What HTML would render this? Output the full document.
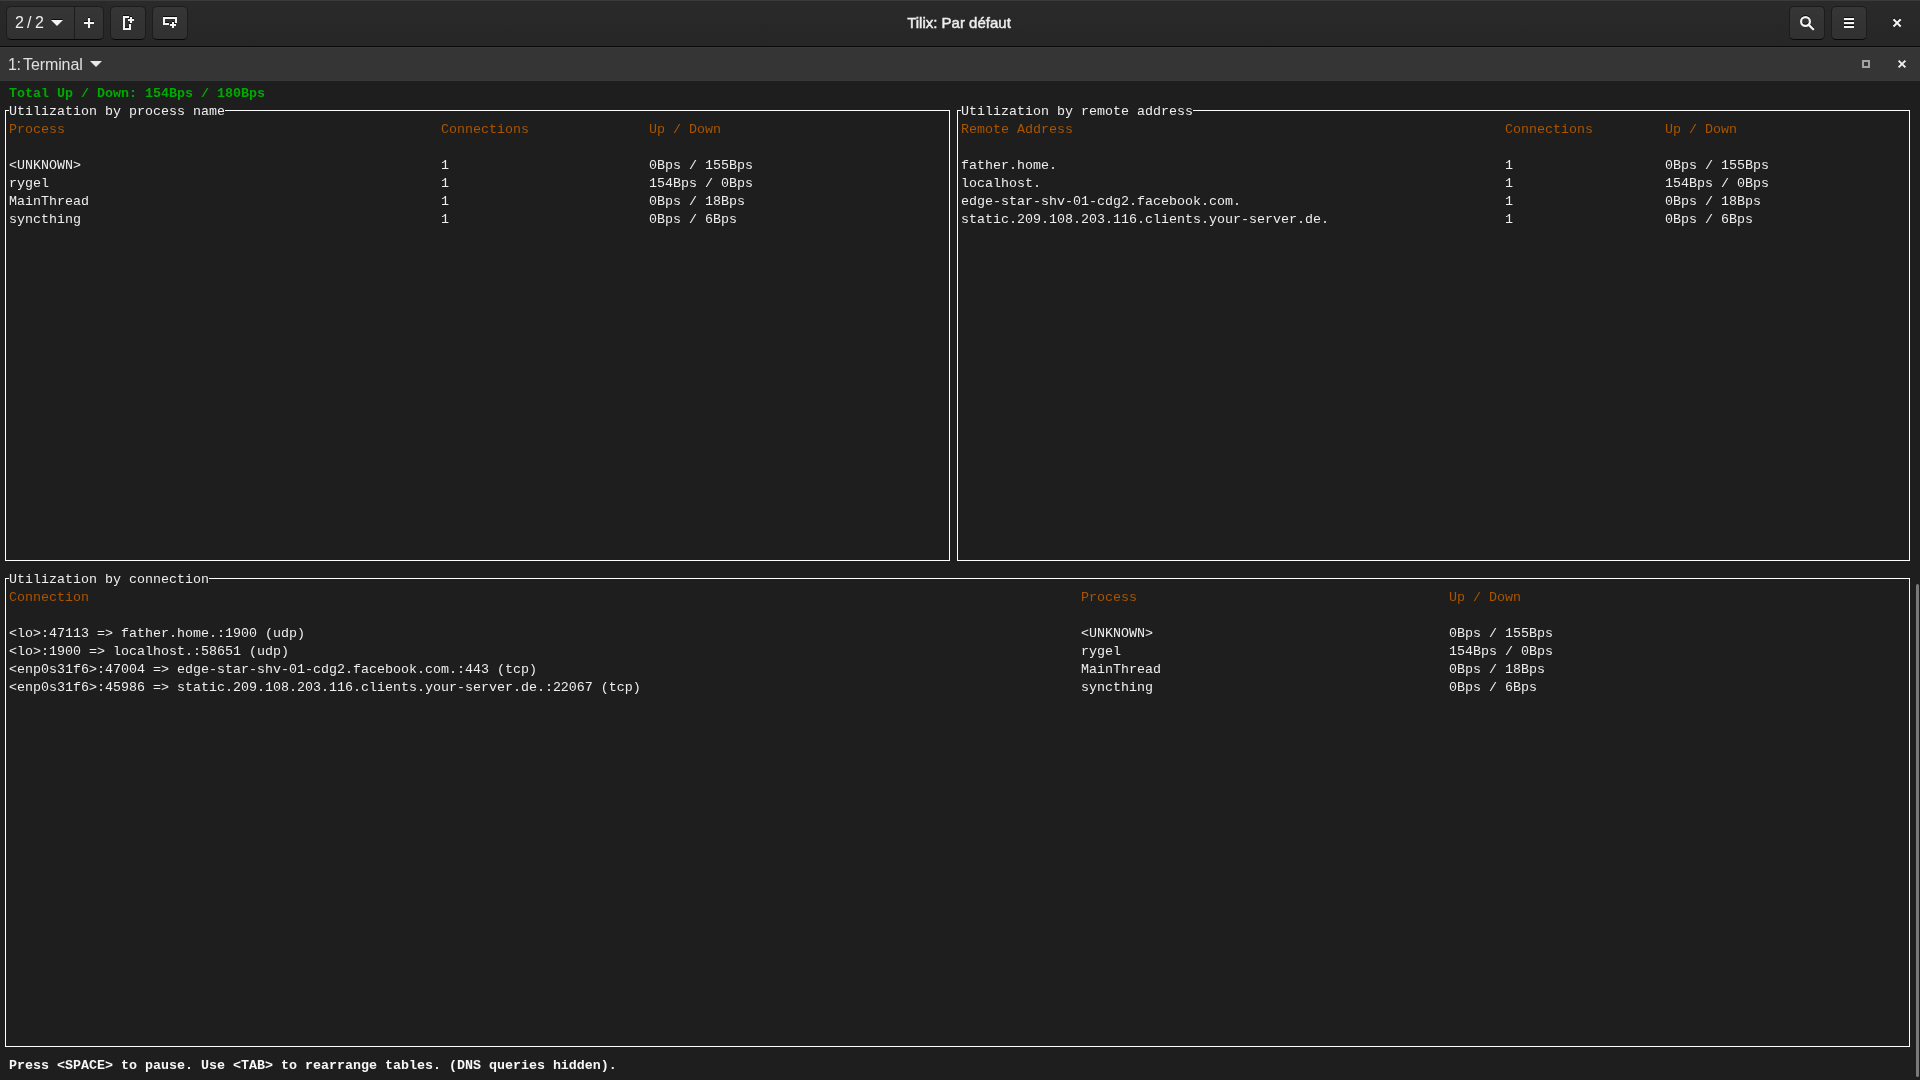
<!DOCTYPE html>
<html><head><meta charset="utf-8"><style>
*{margin:0;padding:0;box-sizing:border-box}
html,body{width:1920px;height:1080px;overflow:hidden;background:#1e1e1e}
body{position:relative;font-family:"Liberation Sans",sans-serif}
#hdr{position:absolute;left:0;top:0;width:1920px;height:47px;background:linear-gradient(#2a2a2a,#262626);border-top:1px solid #3b3b3b;border-bottom:1px solid #0a0a0a}
#tabs{position:absolute;left:0;top:47px;width:1920px;height:34px;background:#353535;border-top:1px solid #393939;border-bottom:1px solid #383838}
#term{position:absolute;left:0;top:81px;width:1920px;height:999px;background:#1e1e1e}
.btn{position:absolute;top:6px;height:34px;background:linear-gradient(#363636,#313131);border:1px solid #1c1c1c;border-bottom-color:#080808;border-radius:5px}
.title{position:absolute;left:0;width:1920px;top:12px;text-align:center;color:#eeeeee;font-weight:normal;font-size:15px;line-height:20px;letter-spacing:0px;-webkit-text-stroke:0.45px #eeeeee;will-change:transform;padding-right:2px}
.hl{position:absolute;font-size:15px;line-height:20px;color:#eeeeec;will-change:transform}
.t{position:absolute;height:18px;line-height:18px;white-space:pre;font-family:"Liberation Mono",monospace;font-size:13.333px;color:#eeeeee}
.g{color:#00aa00;font-weight:bold}
.o{color:#aa5500}
.wb{font-weight:bold;color:#f8f8f8}
.bx{position:absolute;border:1px solid #ffffff}
.tg{position:absolute;height:3px;background:#1e1e1e}
#sb{position:absolute;left:1916px;top:584px;width:3px;height:493px;background:#797979;border-radius:1.5px}
</style></head><body>
<div id="hdr"><div class="title">Tilix: Par défaut</div></div>
<div id="tabs"><div style="position:absolute;left:8px;top:6.5px;font-size:16px;letter-spacing:-0.3px;line-height:20px;color:#e0e0e0;will-change:transform">1:</div><div style="position:absolute;left:22.5px;top:6.5px;font-size:16px;letter-spacing:-0.1px;line-height:20px;color:#e0e0e0;will-change:transform">Terminal</div></div>
<div id="term"></div>
<div id="tl" style="position:absolute;left:0;top:0;width:1920px;height:1080px;will-change:transform">

<div class="btn" style="left:6px;width:98px"></div>
<div style="position:absolute;left:74px;top:7px;width:1px;height:32px;background:#1c1c1c"></div>
<div class="hl" style="left:15.3px;top:13px;font-size:16px">2</div><div class="hl" style="left:26.6px;top:13px;font-size:16px">/</div><div class="hl" style="left:34.6px;top:13px;font-size:16px">2</div>
<div class="btn" style="left:110px;width:36px"></div>
<div class="btn" style="left:152px;width:36px"></div>
<div class="btn" style="left:1789px;width:36px"></div>
<div class="btn" style="left:1831px;width:36px"></div>
<svg style="position:absolute;left:0;top:0" width="1920" height="81">
 <defs>
  <g id="ic">
   <path d="M51 20 L63 20 L57 26 Z" stroke="none"/>
   <g shape-rendering="crispEdges" stroke="none">
    <rect x="84" y="22" width="10" height="2"/><rect x="88" y="18" width="2" height="10"/>
    <rect x="123" y="16" width="2" height="14"/><rect x="123" y="16" width="6" height="2"/>
    <rect x="123" y="28" width="8" height="2"/><rect x="129" y="24" width="2" height="6"/>
    <rect x="128" y="19" width="6" height="2"/><rect x="130" y="17" width="2" height="6"/>
    <rect x="163" y="17" width="14" height="2"/><rect x="163" y="17" width="2" height="8"/>
    <rect x="163" y="23" width="6" height="2"/><rect x="175" y="17" width="2" height="6"/>
    <rect x="170" y="24" width="6" height="2"/><rect x="172" y="22" width="2" height="6"/>
    <rect x="1844" y="18" width="10" height="2"/><rect x="1844" y="22" width="10" height="2"/><rect x="1844" y="26" width="10" height="2"/>
   </g>
   <circle cx="1805.5" cy="21.5" r="4.4" fill="none" stroke-width="2.2"/>
   <path d="M1808.6 24.6 L1813.2 29.2" fill="none" stroke-width="2.2" stroke-linecap="round"/>
   <path d="M1893.5 19.3 L1900.7 26.5 M1900.7 19.3 L1893.5 26.5" fill="none" stroke-width="2"/>
  </g>
 </defs>
 <use href="#ic" y="-1" fill="#000" stroke="#000" opacity="0.75"/>
 <use href="#ic" fill="#f4f4f4" stroke="#f4f4f4"/>
 <rect x="1863" y="61" width="6" height="6" fill="none" stroke="#a2a2a2" stroke-width="2" shape-rendering="crispEdges"/>
 <path d="M1898.6 60.6 L1905.4 67.4 M1905.4 60.6 L1898.6 67.4" stroke="#f0f0f0" stroke-width="1.9"/>
 <path d="M90 61 L102 61 L96 67 Z" fill="#e8e8e8"/>
</svg>

<div class="bx" style="left:5px;top:110px;width:945px;height:451px"></div><div class="bx" style="left:957px;top:110px;width:953px;height:451px"></div><div class="bx" style="left:5px;top:578px;width:1905px;height:469px"></div>
<div class="tg" style="left:9px;top:109px;width:216px"></div><div class="tg" style="left:961px;top:109px;width:232px"></div><div class="tg" style="left:9px;top:577px;width:200px"></div>
<div class="t g" style="left:9px;top:85px">Total Up / Down: 154Bps / 180Bps</div><div class="t w" style="left:9px;top:103px">Utilization by process name</div><div class="t w" style="left:961px;top:103px">Utilization by remote address</div><div class="t o" style="left:9px;top:121px">Process</div><div class="t o" style="left:441px;top:121px">Connections</div><div class="t o" style="left:649px;top:121px">Up / Down</div><div class="t o" style="left:961px;top:121px">Remote Address</div><div class="t o" style="left:1505px;top:121px">Connections</div><div class="t o" style="left:1665px;top:121px">Up / Down</div><div class="t w" style="left:9px;top:157px">&lt;UNKNOWN&gt;</div><div class="t w" style="left:441px;top:157px">1</div><div class="t w" style="left:649px;top:157px">0Bps / 155Bps</div><div class="t w" style="left:9px;top:175px">rygel</div><div class="t w" style="left:441px;top:175px">1</div><div class="t w" style="left:649px;top:175px">154Bps / 0Bps</div><div class="t w" style="left:9px;top:193px">MainThread</div><div class="t w" style="left:441px;top:193px">1</div><div class="t w" style="left:649px;top:193px">0Bps / 18Bps</div><div class="t w" style="left:9px;top:211px">syncthing</div><div class="t w" style="left:441px;top:211px">1</div><div class="t w" style="left:649px;top:211px">0Bps / 6Bps</div><div class="t w" style="left:961px;top:157px">father.home.</div><div class="t w" style="left:1505px;top:157px">1</div><div class="t w" style="left:1665px;top:157px">0Bps / 155Bps</div><div class="t w" style="left:961px;top:175px">localhost.</div><div class="t w" style="left:1505px;top:175px">1</div><div class="t w" style="left:1665px;top:175px">154Bps / 0Bps</div><div class="t w" style="left:961px;top:193px">edge-star-shv-01-cdg2.facebook.com.</div><div class="t w" style="left:1505px;top:193px">1</div><div class="t w" style="left:1665px;top:193px">0Bps / 18Bps</div><div class="t w" style="left:961px;top:211px">static.209.108.203.116.clients.your-server.de.</div><div class="t w" style="left:1505px;top:211px">1</div><div class="t w" style="left:1665px;top:211px">0Bps / 6Bps</div><div class="t w" style="left:9px;top:571px">Utilization by connection</div><div class="t o" style="left:9px;top:589px">Connection</div><div class="t o" style="left:1081px;top:589px">Process</div><div class="t o" style="left:1449px;top:589px">Up / Down</div><div class="t w" style="left:9px;top:625px">&lt;lo&gt;:47113 =&gt; father.home.:1900 (udp)</div><div class="t w" style="left:1081px;top:625px">&lt;UNKNOWN&gt;</div><div class="t w" style="left:1449px;top:625px">0Bps / 155Bps</div><div class="t w" style="left:9px;top:643px">&lt;lo&gt;:1900 =&gt; localhost.:58651 (udp)</div><div class="t w" style="left:1081px;top:643px">rygel</div><div class="t w" style="left:1449px;top:643px">154Bps / 0Bps</div><div class="t w" style="left:9px;top:661px">&lt;enp0s31f6&gt;:47004 =&gt; edge-star-shv-01-cdg2.facebook.com.:443 (tcp)</div><div class="t w" style="left:1081px;top:661px">MainThread</div><div class="t w" style="left:1449px;top:661px">0Bps / 18Bps</div><div class="t w" style="left:9px;top:679px">&lt;enp0s31f6&gt;:45986 =&gt; static.209.108.203.116.clients.your-server.de.:22067 (tcp)</div><div class="t w" style="left:1081px;top:679px">syncthing</div><div class="t w" style="left:1449px;top:679px">0Bps / 6Bps</div><div class="t wb" style="left:9px;top:1057px">Press &lt;SPACE&gt; to pause. Use &lt;TAB&gt; to rearrange tables. (DNS queries hidden).</div>
</div>
<div id="sb"></div>
</body></html>
